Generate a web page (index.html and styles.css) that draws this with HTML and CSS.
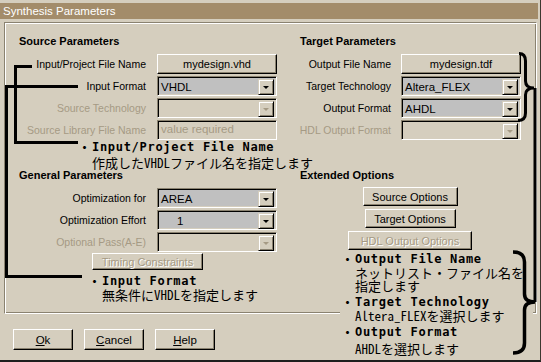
FILE: index.html
```html
<!DOCTYPE html>
<html lang="ja">
<head>
<meta charset="utf-8">
<title>Synthesis Parameters</title>
<link rel="stylesheet" href="styles.css">
</head>
<body>
<div class="window">
  <div class="titlebar">Synthesis Parameters</div>
  <div class="group">
    <section class="col col-left">
      <h2 class="heading">Source Parameters</h2>
      <div class="form">
        <span class="label">Input/Project File Name</span>
        <button class="btn">mydesign.vhd</button>
        <span class="label">Input Format</span>
        <div class="combo"><span class="val">VHDL</span><span class="drop"></span></div>
        <span class="label is-disabled">Source Technology</span>
        <div class="combo is-disabled"><span class="val"></span><span class="drop"></span></div>
        <span class="label is-disabled">Source Library File Name</span>
        <div class="edit is-disabled">value required</div>
      </div>
      <h2 class="heading heading-lower">General Parameters</h2>
      <div class="form">
        <span class="label">Optimization for</span>
        <div class="combo"><span class="val">AREA</span><span class="drop"></span></div>
        <span class="label">Optimization Effort</span>
        <div class="combo"><span class="val val-indent">1</span><span class="drop"></span></div>
        <span class="label is-disabled">Optional Pass(A-E)</span>
        <div class="combo is-disabled"><span class="val"></span><span class="drop"></span></div>
      </div>
      <button class="btn btn-timing is-disabled" disabled>Timing Constraints</button>
    </section>
    <section class="col col-right">
      <h2 class="heading">Target Parameters</h2>
      <div class="form">
        <span class="label">Output File Name</span>
        <button class="btn">mydesign.tdf</button>
        <span class="label">Target Technology</span>
        <div class="combo"><span class="val">Altera_FLEX</span><span class="drop"></span></div>
        <span class="label">Output Format</span>
        <div class="combo"><span class="val">AHDL</span><span class="drop"></span></div>
        <span class="label is-disabled">HDL Output Format</span>
        <div class="combo is-disabled"><span class="val"></span><span class="drop"></span></div>
      </div>
      <h2 class="heading heading-lower">Extended Options</h2>
      <div class="ext">
        <button class="btn btn-src">Source Options</button>
        <button class="btn btn-tgt">Target Options</button>
        <button class="btn btn-hdl is-disabled" disabled>HDL Output Options</button>
      </div>
    </section>
  </div>
  <div class="actions">
    <button class="btn btn-action"><u>O</u>k</button>
    <button class="btn btn-action"><u>C</u>ancel</button>
    <button class="btn btn-action"><u>H</u>elp</button>
  </div>

  <div class="note note-a">
    <div class="note-title"><span class="dot">・</span>Input/Project File Name</div>
    <div class="line">作成したVHDLファイル名を指定します</div>
  </div>
  <div class="note note-b">
    <div class="note-title"><span class="dot">・</span>Input Format</div>
    <div class="line">無条件にVHDLを指定します</div>
  </div>
  <div class="note note-c">
    <div class="note-item">
      <div class="note-title"><span class="dot">・</span>Output File Name</div>
      <div class="line">ネットリスト・ファイル名を</div>
      <div class="line">指定します</div>
    </div>
    <div class="note-item">
      <div class="note-title"><span class="dot">・</span>Target Technology</div>
      <div class="line">Altera_FLEXを選択します</div>
    </div>
    <div class="note-item note-item-last">
      <div class="note-title"><span class="dot">・</span>Output Format</div>
      <div class="line">AHDLを選択します</div>
    </div>
  </div>

  <svg class="marks" width="541" height="362" viewBox="0 0 541 362" aria-hidden="true">
    <g fill="none" stroke="#000" stroke-width="3">
      <path d="M32 66.5H15.5V142.5H78"/>
      <path d="M78 86.5H6.5V276.5H82"/>
      <path d="M519 53.5Q525.5 53.5 525.5 61V81Q525.5 88 534 88Q525.5 88 525.5 95V113Q525.5 120.5 518 120.5"/>
      <path d="M535 88V302"/>
      <path stroke-width="3.5" d="M513 252Q524.5 252 524.5 262V294Q524.5 302 535 302Q524.5 302 524.5 310V343Q524.5 353 513 353"/>
    </g>
  </svg>
</div>
</body>
</html>
```

FILE: styles.css
```css
:root {
  --bg: #d5cebe;
  --title: #a38c6a;
  --shadow: #8a8270;
  --disabled: #a59a84;
  --field: #c0c0c0;
}

* { box-sizing: border-box; }

html, body { margin: 0; padding: 0; }

body {
  background: var(--bg);
  font-family: "Liberation Sans", Arial, sans-serif;
  font-size: 11px;
  color: #000;
}

.window {
  position: relative;
  width: 541px;
  height: 362px;
  padding-top: 3px;
  padding-right: 2px;
  border-right: 1px solid #3c3830;
  border-bottom: 2px solid #1e1e1e;
  background: var(--bg);
  overflow: hidden;
}

.titlebar {
  height: 16px;
  line-height: 16px;
  padding-left: 3px;
  background: var(--title);
  color: #fff;
  font-size: 11.5px;
}

.group {
  margin: 3px 0 0 4px;
  width: 533px;
  height: 292px;
  padding: 12px 0 0 5px;
  border: 1px solid;
  border-color: var(--shadow) #fff #fff var(--shadow);
  box-shadow: inset 1px 1px #fff, inset -1px -1px var(--shadow);
  display: grid;
  grid-template-columns: 267px 239px;
  column-gap: 5px;
  align-content: start;
}

.heading {
  margin: 0 0 6px 9px;
  font-size: 11px;
  font-weight: bold;
  line-height: 13px;
}

.col-right .heading { margin-left: 18px; }

.heading-lower { margin-top: 29px; }

.form {
  display: grid;
  grid-template-columns: 137px 120px;
  column-gap: 10px;
  row-gap: 2px;
  grid-auto-rows: 20px;
  align-items: center;
}

.col-right .form {
  grid-template-columns: 110px 120px;
  column-gap: 9px;
}

.label {
  text-align: right;
  white-space: nowrap;
  padding-right: 1px;
  font-size: 10.5px;
}

.is-disabled { color: var(--disabled); }

.btn {
  font: inherit;
  color: #000;
  margin: 0;
  padding: 0;
  height: 20px;
  background: var(--bg);
  border: 1px solid;
  border-color: #fff #000 #000 #fff;
  box-shadow: inset -1px -1px var(--shadow);
  white-space: nowrap;
}

.btn.is-disabled {
  color: var(--disabled);
  text-shadow: 1px 1px #fff;
}

.combo {
  display: flex;
  height: 20px;
  padding: 2px;
  border: 1px solid;
  border-color: var(--shadow) #fff #fff var(--shadow);
  box-shadow: inset 1px 1px #000, inset -1px -1px var(--bg);
  background: var(--field);
}

.combo.is-disabled { background: var(--bg); }

.val {
  flex: 1;
  padding-left: 1px;
  line-height: 16px;
  font-size: 11.5px;
}

.val-indent { padding-left: 17px; }

.drop {
  width: 16px;
  height: 16px;
  display: flex;
  align-items: center;
  justify-content: center;
  background: var(--bg);
  border: 1px solid;
  border-color: var(--bg) #000 #000 var(--bg);
  box-shadow: inset 1px 1px #fff, inset -1px -1px var(--shadow);
}

.drop::after {
  content: "";
  width: 0;
  height: 0;
  border-left: 3px solid transparent;
  border-right: 3px solid transparent;
  border-top: 3px solid #000;
  margin-top: 1px;
}

.combo.is-disabled .drop::after {
  border-top-color: var(--disabled);
}

.edit {
  height: 20px;
  padding-left: 3px;
  line-height: 16px;
  font-size: 11.5px;
  border: 1px solid;
  border-color: var(--shadow) #fff #fff var(--shadow);
  box-shadow: inset 1px 1px #000, inset -1px -1px var(--bg);
  background: var(--bg);
}

.btn-timing {
  width: 111px;
  height: 17px;
  line-height: 14px;
  margin: 1px 0 0 82px;
}

.ext {
  width: 124px;
  margin: -1px 0 0 66px;
  display: flex;
  flex-direction: column;
  align-items: center;
  gap: 3px;
}

.ext .btn { height: 19px; }
.btn-src { width: 95px; }
.btn-tgt { width: 91px; }
.btn-hdl { width: 124px; }

.actions {
  display: flex;
  gap: 11px;
  margin: 15px 0 0 13px;
}

.btn-action {
  width: 60px;
  height: 21px;
  font-size: 11.5px;
}

/* annotation overlays */
.note {
  position: absolute;
  font-family: "Noto Sans Mono CJK JP", "Noto Sans CJK JP", sans-serif;
  font-size: 13px;
  line-height: 13px;
  color: #000;
  white-space: nowrap;
}

.line {
  height: 13px;
  line-height: 13px;
}

.note-title {
  height: 13px;
  font-family: "DejaVu Sans Mono", "Liberation Mono", monospace;
  font-weight: bold;
  font-size: 12px;
  letter-spacing: 0.7px;
  line-height: 13px;
}

.dot {
  display: inline-block;
  width: 15px;
  height: 13px;
  margin-left: -15px;
  text-align: center;
  letter-spacing: 0;
  vertical-align: top;
  font-family: "Noto Sans CJK JP", sans-serif;
  line-height: 13px;
}

.note-a { left: 92px; top: 141px; }
.note-a .note-title { margin-bottom: 2px; }

.note-b { left: 102px; top: 275px; }

.note-c {
  left: 340px;
  top: 250px;
  width: 193px;
  height: 107px;
  padding: 3px 0 0 15px;
  background: var(--bg);
}

.note-item + .note-item { margin-top: 4px; }
.note-item-last { margin-top: 3px; }
.note-item-last .line { margin-top: 3px; }

.marks {
  position: absolute;
  left: 0;
  top: 0;
  pointer-events: none;
}
```
